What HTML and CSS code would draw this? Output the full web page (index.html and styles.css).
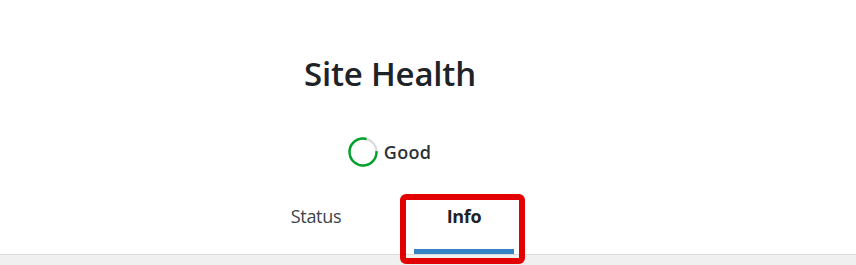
FILE: index.html
```html
<!DOCTYPE html>
<html>
<head>
  <title>Site Health</title>
  <link rel="stylesheet" href="styles.css">
</head>
<body>
  <div class="health-header">
    <div class="header-inner">
      <h1 class="title">Site Health</h1>

      <div class="progress">
        <svg class="progress-ring" width="30" height="30" viewBox="0 0 30 30">
          <circle class="ring-bg" cx="15" cy="15" r="13.5"></circle>
          <circle class="ring-bar" cx="15" cy="15" r="13.5" stroke-dasharray="84.8" stroke-dashoffset="17"></circle>
        </svg>
        <span class="progress-label">Good</span>
      </div>

      <nav class="tabs">
        <a class="tab" href="#status">Status</a>
        <a class="tab active" href="#info">Info</a>
      </nav>
    </div>
  </div>
</body>
</html>
```

FILE: styles.css
```css
/* Page */
body {
  margin: 0;
  padding-bottom: 20px;
  background-color: #f0f0f1;
  font-family: "Open Sans", "Noto Sans", sans-serif;
  color: #1d2327;
}

/* White header with the title, score and tabs */
.health-header {
  background-color: #fff;
  border-bottom: 1px solid #dcdcde;
}

.header-inner {
  width: 780px;
  text-align: center;
}

.title {
  margin: 0;
  padding-top: 52px;
  font-size: 33px;
  line-height: 44px;
  font-weight: 600;
  letter-spacing: -0.2px;
}

/* Score circle */
.progress {
  display: flex;
  justify-content: center;
  align-items: center;
  gap: 6px;
  margin-top: 41px;
  padding-right: 1px;
}

.progress-ring {
  display: block;
  transform: rotate(-4deg);
}

.progress-ring circle {
  fill: none;
  stroke-width: 2.4;
}

.ring-bg {
  stroke: #dcdcde;
}

.ring-bar {
  stroke: #00a32a;
}

.progress-label {
  font-size: 18px;
  font-weight: 600;
  line-height: 24px;
  color: #2c3338;
  letter-spacing: 0.3px;
}

/* Tabs */
.tabs {
  display: flex;
  justify-content: center;
  gap: 38px;
  margin-top: 28px;
  padding-right: 10px;
}

.tab {
  position: relative;
  display: block;
  padding: 9px 0 21px;
  font-size: 18px;
  line-height: 24px;
  color: #3c434a;
  text-decoration: none;
  letter-spacing: -0.3px;
}

.tab:first-child {
  width: 120px;
}

.tab.active {
  width: 100px;
  font-weight: 700;
  color: #1d2327;
  border-bottom: 5px solid #3582c4;
}

/* red highlight drawn over the active tab */
.tab.active::after {
  content: "";
  position: absolute;
  z-index: 2;
  left: -14px;
  right: -11px;
  top: -1px;
  bottom: -15px;
  border: 6px solid #e30000;
  border-radius: 6px;
}
```
